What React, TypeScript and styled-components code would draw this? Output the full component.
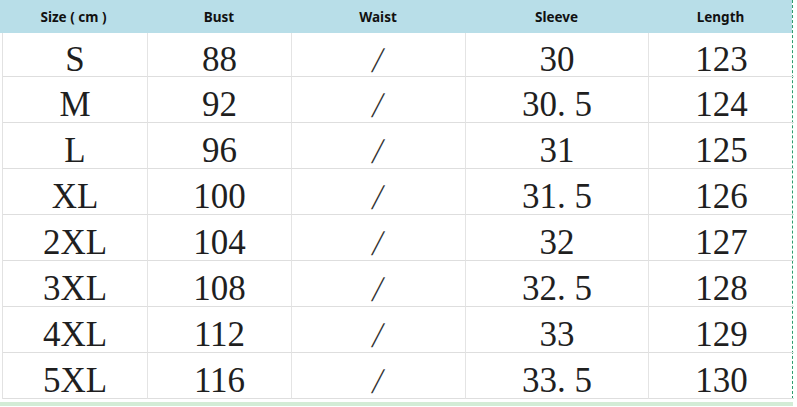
import React from "react";
import styled, { createGlobalStyle } from "styled-components";

const GlobalStyle = createGlobalStyle`
  body {
    margin: 0;
    background: #ffffff;
  }
`;

const Wrapper = styled.div`
  width: 797px;
  height: 407px;
  overflow: hidden;
  background: #ffffff;
`;

const Table = styled.div`
  width: 793px;
  border-right: 1px dashed #2f9e6e;
  box-sizing: border-box;
`;

const HeaderRow = styled.div`
  display: grid;
  grid-template-columns: 147px 144px 174px 183px 145px;
  height: 33px;
  background: #b8dee8;
`;

const HeaderCell = styled.div`
  display: flex;
  align-items: center;
  justify-content: center;
  font-family: "Noto Sans", "Noto Sans CJK SC", sans-serif;
  font-weight: 700;
  font-size: 13.5px;
  color: #111111;
`;

const Body = styled.div`
  display: grid;
  grid-template-columns: 145px 144px 174px 183px 145px;
  grid-template-rows: 44px repeat(7, 46px);
  margin-left: 2px;
  border-left: 1px solid #e2e2e2;
  width: 791px;
  box-sizing: border-box;
`;

const Cell = styled.div<{ $last?: boolean }>`
  display: flex;
  align-items: center;
  justify-content: center;
  border-bottom: 1px solid #dedede;
  border-right: ${(p) => (p.$last ? "none" : "1px solid #e4e4e4")};
  font-family: "Liberation Serif", "Times New Roman", serif;
  font-size: 35px;
  color: #1f1f1f;
  line-height: 1;
  padding-top: 10px;
`;

const Slash = styled.span`
  display: inline-block;
  font-size: 36px;
  font-weight: 300;
  color: #333333;
  transform: skewX(-12deg) scaleX(0.9);
`;

const Footer = styled.div`
  width: 793px;
  height: 4px;
  margin-top: 3px;
  background: #d3ecd6;
`;

const headers = ["Size ( cm )", "Bust", "Waist", "Sleeve", "Length"];

const rows = [
  ["S", "88", "/", "30", "123"],
  ["M", "92", "/", "30. 5", "124"],
  ["L", "96", "/", "31", "125"],
  ["XL", "100", "/", "31. 5", "126"],
  ["2XL", "104", "/", "32", "127"],
  ["3XL", "108", "/", "32. 5", "128"],
  ["4XL", "112", "/", "33", "129"],
  ["5XL", "116", "/", "33. 5", "130"],
];

const App = () => {
  return (
    <Wrapper>
      <GlobalStyle />
      <Table>
        <HeaderRow>
          {headers.map((h) => (
            <HeaderCell key={h}>{h}</HeaderCell>
          ))}
        </HeaderRow>
        <Body>
          {rows.map((row, i) =>
            row.map((value, j) => (
              <Cell key={`${i}-${j}`} $last={j === row.length - 1}>
                {value === "/" ? <Slash>/</Slash> : value}
              </Cell>
            ))
          )}
        </Body>
      </Table>
      <Footer />
    </Wrapper>
  );
};

export default App;
